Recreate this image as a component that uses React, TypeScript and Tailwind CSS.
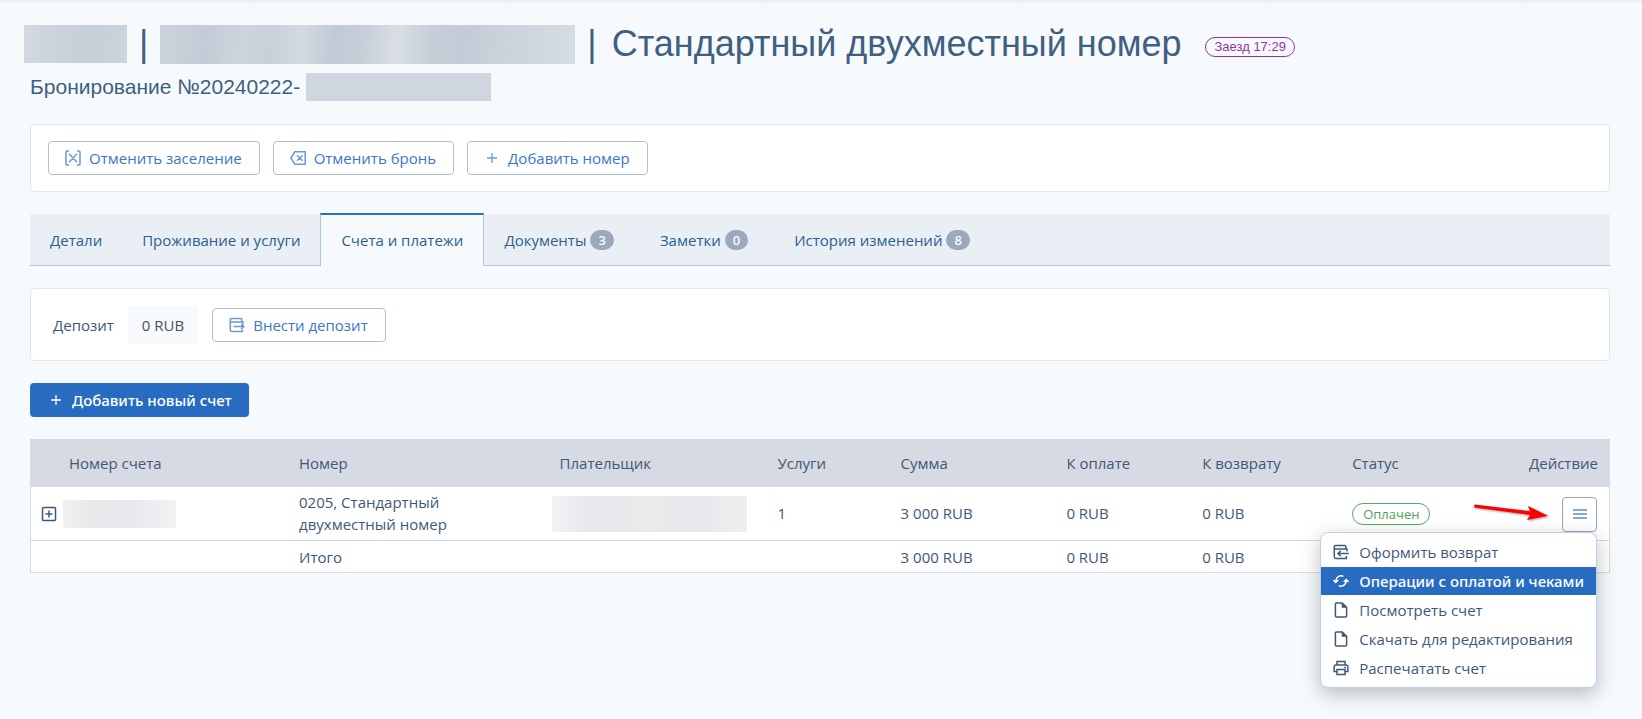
import type { ReactNode } from "react";

type IconProps = { className?: string };

function Svg({ className = "", children }: IconProps & { children: ReactNode }) {
  return (
    <svg
      viewBox="0 0 16 16"
      className={`size-4 shrink-0 ${className}`}
      fill="none"
      stroke="currentColor"
      strokeWidth="1.5"
      aria-hidden="true"
    >
      {children}
    </svg>
  );
}

const CancelCheckIn = () => (
  <Svg>
    <path d="M4 1H2.2A1.2 1.2 0 0 0 1 2.2V13.8A1.2 1.2 0 0 0 2.2 15H4M12 1H13.8A1.2 1.2 0 0 1 15 2.2V13.8A1.2 1.2 0 0 1 13.8 15H12M4 3.8L12 12.2M12 3.8L4 12.2" />
  </Svg>
);

const CancelBooking = () => (
  <Svg>
    <path d="M4.8 1.8H15.2V14.2H4.8L.9 8ZM7 5.2L12.6 10.8M12.6 5.2L7 10.8" />
  </Svg>
);

const Plus = () => (
  <Svg>
    <path d="M8 3V13M3 8H13" strokeWidth="1.3" />
  </Svg>
);

const DepositIn = () => (
  <Svg>
    <path d="M12.8 4.8V2.5a1 1 0 0 0-1-1H2.5a1.2 1.2 0 0 0-1.2 1.2V13a1.4 1.4 0 0 0 1.4 1.4H13.4V12.5M1.5 5H14V7.5M4.5 9.6H14.5M12.2 7.2L14.8 9.6L12.2 12" />
  </Svg>
);

const Refund = () => (
  <Svg>
    <path d="M12.8 4.8V2.5a1 1 0 0 0-1-1H2.5a1.2 1.2 0 0 0-1.2 1.2V13a1.4 1.4 0 0 0 1.4 1.4H13.4V12M1.5 5H14V7.5M15.8 9.5H5M7.8 6.8L5 9.5L7.8 12.2" />
  </Svg>
);

const Sync = () => (
  <Svg>
    <path d="M2.8 9V8a5.2 5.2 0 0 1 7.6-4.6M.4 7L2.8 9.4L5.2 7M13.2 7V8a5.2 5.2 0 0 1-7.6 4.6M10.8 9L13.2 6.6L15.6 9" />
  </Svg>
);

const File = () => (
  <Svg>
    <path d="M3.4 1H9.2L13.6 5.2V14A1 1 0 0 1 12.6 15H3.4A1 1 0 0 1 2.4 14V2A1 1 0 0 1 3.4 1Z" />
    <path d="M9 1V5.4H13.6Z" fill="currentColor" strokeWidth=".6" />
  </Svg>
);

const Printer = () => (
  <Svg>
    <path d="M4 5V1.6H12V5M4 11.5H1.1V6.7A1.6 1.6 0 0 1 2.7 5.1H13.3A1.6 1.6 0 0 1 14.9 6.7V11.5H12M4 9.4H12V14.4H4ZM11.3 7.4H13" />
  </Svg>
);

const tabs = [
  { title: "Детали" },
  { title: "Проживание и услуги" },
  { title: "Счета и платежи", active: true },
  { title: "Документы", count: 3 },
  { title: "Заметки", count: 0 },
  { title: "История изменений", count: 8 },
];

const menuItems = [
  { title: "Оформить возврат", icon: <Refund /> },
  { title: "Операции с оплатой и чеками", icon: <Sync />, active: true },
  { title: "Посмотреть счет", icon: <File /> },
  { title: "Скачать для редактирования", icon: <File /> },
  { title: "Распечатать счет", icon: <Printer /> },
];

function OutlineButton({ icon, children }: { icon: ReactNode; children: ReactNode }) {
  return (
    <button
      type="button"
      className="flex h-[34px] items-center gap-2 whitespace-nowrap rounded border border-[#b0bfd0] bg-white pl-4 pr-[17px] text-[#3c76c6]"
    >
      <span className="text-[#6c98d4]">{icon}</span>
      {children}
    </button>
  );
}

export default function App() {
  return (
    <div className="min-h-screen bg-[#f6fafd] font-['Open_Sans','Noto_Sans',sans-serif] text-[15px] leading-[22px] text-[#3f5878]">
      <div className="h-1 bg-gradient-to-b from-[#e7ebee] to-[#f6fafd]" />

      <main className="pl-[30px] pr-8 pt-5">
        <header className="font-['Liberation_Sans',Arial,sans-serif] text-[#405f82]">
          <h1 className="-ml-1.5 flex items-center text-[36px] leading-10">
            <span className="h-[38px] w-[103px] bg-[linear-gradient(100deg,#d3d9e1,#c9d1da_40%,#c6d0d9_70%,#ccd5dd)]" />
            <span className="mx-3">|</span>
            <span className="h-[39px] w-[415px] bg-[linear-gradient(95deg,#cbd3dc,#c3ccd6_12%,#cdd4dd_20%,#c8d0d9_27%,#d3d9e1_34%,#c1cbd5_42%,#c7cfd9_49%,#d9dee5_57%,#c6cfd8_65%,#c3ccd6_73%,#ccd3dc_84%,#d6dce3)]" />
            <span className="ml-3 mr-[15px]">|</span>
            <span>Стандартный двухместный номер</span>
            <span className="ml-6 mt-1.5 rounded-full border border-[#9632a8] px-2 text-[13px] leading-[18px] text-[#9632a8]">
              Заезд 17:29
            </span>
          </h1>
          <div className="mt-[9px] flex items-center text-[21px] leading-7">
            <span className="min-w-[276px]">Бронирование №20240222-</span>
            <span className="h-7 w-[185px] bg-[#cfd6df]" />
          </div>
        </header>

        <section className="mt-[23px] flex gap-[13px] rounded border border-[#dfe8f1] bg-white px-[17px] py-4">
          <OutlineButton icon={<CancelCheckIn />}>Отменить заселение</OutlineButton>
          <OutlineButton icon={<CancelBooking />}>Отменить бронь</OutlineButton>
          <OutlineButton icon={<Plus />}>Добавить номер</OutlineButton>
        </section>

        <nav className="mt-[22px] flex h-[52px] border-b border-[#abc8e3] bg-[#eaeff6]">
          {tabs.map((tab) => (
            <a
              key={tab.title}
              href="#"
              className={
                tab.active
                  ? "-mb-px -mt-px flex items-center gap-1 border-x border-t-2 border-x-[#abc8e3] border-t-[#2e72b5] bg-[#f6fafd] px-5 pb-0.5 text-[#2c5f8f]"
                  : "flex items-center gap-1 px-5 text-[#2c5f8f]"
              }
            >
              {tab.title}
              {tab.count !== undefined && (
                <span className="mr-1.5 rounded-full bg-[#9ca8bb] px-2 font-['Noto_Sans',sans-serif] text-[13px] font-medium leading-5 text-white">
                  {tab.count}
                </span>
              )}
            </a>
          ))}
        </nav>

        <section className="mt-[22px] flex items-center rounded border border-[#dfe8f1] bg-white px-[22px] py-[17px]">
          <span>Депозит</span>
          <span className="ml-[14px] flex h-[37px] items-center bg-[#f6fafd] px-[14px] text-[#4a5058]">
            0 RUB
          </span>
          <div className="ml-[14px]">
            <OutlineButton icon={<DepositIn />}>Внести депозит</OutlineButton>
          </div>
        </section>

        <button
          type="button"
          className="mt-[22px] flex h-[34px] items-center gap-2 rounded bg-[#286cc2] pl-[18px] pr-[17px] font-['Noto_Sans',sans-serif] font-medium text-white"
        >
          <Plus />
          Добавить новый счет
        </button>

        <table className="mt-[22px] w-full table-fixed border border-[#d6dae2] bg-white text-left">
          <colgroup>
            <col className="w-[16.5%]" />
            <col className="w-[16.5%]" />
            <col className="w-[13.8%]" />
            <col className="w-[7.8%]" />
            <col className="w-[10.5%]" />
            <col className="w-[8.6%]" />
            <col className="w-[9.5%]" />
            <col className="w-[8%]" />
            <col />
          </colgroup>
          <thead className="bg-[#d6dae2]">
            <tr className="h-[47px]">
              <th className="pl-[38px] font-normal">Номер счета</th>
              <th className="pl-2 font-normal">Номер</th>
              <th className="pl-2 font-normal">Плательщик</th>
              <th className="pl-2 font-normal">Услуги</th>
              <th className="pl-2 font-normal">Сумма</th>
              <th className="pl-2 font-normal">К оплате</th>
              <th className="pl-2 font-normal">К возврату</th>
              <th className="pl-2 font-normal">Статус</th>
              <th className="pr-[11px] text-right font-normal">Действие</th>
            </tr>
          </thead>
          <tbody>
            <tr className="h-[54px] border-b border-[#d6dae2]">
              <td className="pt-0.5">
                <div className="flex items-center pl-2.5">
                  <button type="button" aria-label="Развернуть" className="text-[#3f5878]">
                    <Svg>
                      <rect x="1.5" y="1.5" width="13" height="13" rx="1" />
                      <path d="M8 4.5V11.5M4.5 8H11.5" />
                    </Svg>
                  </button>
                  <span className="ml-1.5 h-7 w-[113px] bg-[linear-gradient(90deg,#f0f1f3,#e8e9eb_25%,#e6e7eb_55%,#f1f2f4)]" />
                </div>
              </td>
              <td className="pl-2 pr-[60px]">0205, Стандартный двухместный номер</td>
              <td className="pt-0.5">
                <div className="h-9 w-[195px] bg-[linear-gradient(90deg,#f1f2f4,#e7e8eb_20%,#e9eaec_50%,#e7e8eb_75%,#eeeff1)]" />
              </td>
              <td className="pl-2">1</td>
              <td className="pl-2">3 000 RUB</td>
              <td className="pl-2">0 RUB</td>
              <td className="pl-2">0 RUB</td>
              <td className="pl-2">
                <span className="inline-block rounded-full border border-[#4fae5b] px-[10px] text-[13px] leading-5 text-[#4fa35a]">
                  Оплачен
                </span>
              </td>
              <td className="pr-3 pt-0.5">
                <div className="relative flex items-center justify-end">
                  <svg viewBox="0 0 76 20" className="mr-[13px] h-5 w-[76px] drop-shadow-[1px_1px_1px_rgba(0,0,0,0.4)]" aria-hidden="true">
                    <path d="M1 3.5L1.6 .5L57 7.2L55 2L75 11.8L54 16L57 11Z" fill="#f00" />
                  </svg>
                  <button
                    type="button"
                    aria-label="Действия"
                    className="flex size-[35px] items-center justify-center rounded border border-[#98a5b8] bg-white text-[#5b8bd0]"
                  >
                    <Svg>
                      <path d="M1 4H15M1 8H15M1 12H15" />
                    </Svg>
                  </button>
                  <ul className="absolute right-0 top-full z-10 flex flex-col gap-px rounded-lg border border-[#bcd0ee] bg-white py-[5px] shadow-[0_6px_20px_rgba(0,0,0,0.25)]">
                    {menuItems.map((item) => (
                      <li key={item.title}>
                        <button
                          type="button"
                          className={
                            item.active
                              ? "flex h-7 w-full items-center gap-2.5 whitespace-nowrap bg-[#286cc2] px-3 font-['Noto_Sans',sans-serif] font-medium text-white"
                              : "flex h-7 w-full items-center gap-2.5 whitespace-nowrap px-3"
                          }
                        >
                          {item.icon}
                          {item.title}
                        </button>
                      </li>
                    ))}
                  </ul>
                </div>
              </td>
            </tr>
            <tr className="h-8">
              <td />
              <td className="pl-2">Итого</td>
              <td />
              <td />
              <td className="pl-2">3 000 RUB</td>
              <td className="pl-2">0 RUB</td>
              <td className="pl-2">0 RUB</td>
              <td />
              <td />
            </tr>
          </tbody>
        </table>
      </main>
    </div>
  );
}
